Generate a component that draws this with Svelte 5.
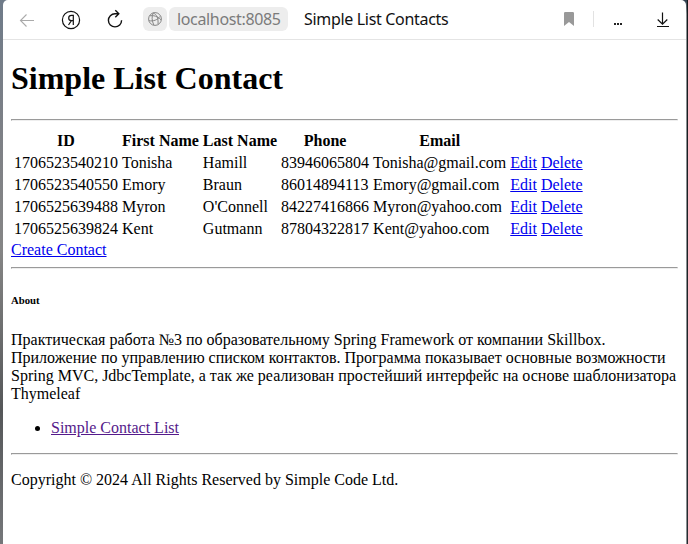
<script>
  const contacts = [
    ['1706523540210', 'Tonisha', 'Hamill', '83946065804', 'Tonisha@gmail.com'],
    ['1706523540550', 'Emory', 'Braun', '86014894113', 'Emory@gmail.com'],
    ['1706525639488', 'Myron', "O'Connell", '84227416866', 'Myron@yahoo.com'],
    ['1706525639824', 'Kent', 'Gutmann', '87804322817', 'Kent@yahoo.com']
  ];
  const headings = ['ID', 'First Name', 'Last Name', 'Phone', 'Email'];
</script>

<div class="desktop">
  <div class="window">
    <header class="toolbar">
      <svg class="back" width="16" height="16" viewBox="0 0 16 16" fill="none" stroke="#aaa" stroke-width="1.1"><path d="M15 8.5H1.5M7.5 2.5l-6 6 6 6" /></svg>
      <svg class="ya" width="20" height="20" viewBox="0 0 20 20" fill="none" stroke="#111" stroke-width="1.2"><circle cx="10" cy="10" r="8.6" /><path d="M12.3 15V5.4H10.6C8.7 5.4 7.7 6.5 7.7 8c0 1.7 1 2.6 2.7 2.6h1.9M10.4 10.7L7.5 15" /></svg>
      <svg class="reload" width="18" height="20" viewBox="0 0 18 20" fill="none" stroke="#111" stroke-width="1.4"><path d="M12.4 4.7H9a6.6 6.6 0 1 0 6.6 6.6M9.3 1.2l3.5 3.5-3.5 3.5" /></svg>
      <span class="globe">
        <svg width="14" height="14" viewBox="0 0 14 14" fill="none" stroke="#858585" stroke-width="1"><circle cx="7" cy="7" r="6.4" /><path d="M5.2.9C3.6 4.5 3.7 8.6 5.8 13M5.3 1c3.4 1.6 5.2 4.7 4.7 11.4M.9 8.7c4.4.9 8.9-.9 11.2-4.4M1.8 3.9c3.2-.9 8 .3 11.2 4" /></svg>
      </span>
      <span class="address">localhost:8085</span>
      <span class="title">Simple List Contacts</span>
      <svg class="bookmark" width="10" height="14" viewBox="0 0 10 14"><path d="M0 1.2Q0 0 1.2 0h7.6Q10 0 10 1.2V14L5 10 0 14z" fill="#999" /></svg>
      <span class="divider"></span>
      <svg class="more" width="8" height="2" viewBox="0 0 8 2" fill="#222"><path d="M0 0h2v2H0zM3 0h2v2H3zM6 0h2v2H6z" /></svg>
      <svg class="download" width="12" height="16" viewBox="0 0 12 16" fill="none" stroke="#111" stroke-width="1.2"><path d="M5.5 .5v11.7M.7 7.5l4.8 4.7 4.8-4.7M0 14.5h12" /></svg>
    </header>
    <main>
      <h1>Simple List Contact</h1>
      <hr />
      <table>
        <thead>
          <tr>{#each headings as heading}<th>{heading}</th>{/each}</tr>
        </thead>
        <tbody>
          {#each contacts as contact}
            <tr>
              {#each contact as value}<td>{value}</td>{/each}
              <td><a href="#edit">Edit</a></td>
              <td><a href="#delete">Delete</a></td>
            </tr>
          {/each}
        </tbody>
      </table>
      <a href="#create">Create Contact</a>
      <hr />
      <h6>About</h6>
      <p>Практическая работа №3 по образовательному Spring Framework от компании Skillbox. Приложение по управлению списком контактов. Программа показывает основные возможности Spring MVC, JdbcTemplate, а так же реализован простейший интерфейс на основе шаблонизатора Thymeleaf</p>
      <ul><li><a class="visited" href="#list">Simple Contact List</a></li></ul>
      <hr />
      <p>Copyright © 2024 All Rights Reserved by Simple Code Ltd.</p>
    </main>
  </div>
</div>

<style>
  .desktop {
    height: 544px;
    box-sizing: border-box;
    padding: 0 2px 0 3px;
    overflow: hidden;
    background:
      linear-gradient(#15191c, #262c30) right / 1px 100% no-repeat,
      linear-gradient(#2c3c4c, #8a8f92 14px, #8a8f92) right / 8px 100% no-repeat,
      linear-gradient(#6f7b89, #7d8086 130px, #858585 250px, #555759 410px, #75777a);
  }
  .window {
    height: 100%;
    background: #fff;
    border-radius: 5px 5px 0 0;
    display: flow-root;
  }
  .toolbar {
    height: 39px;
    border-bottom: 1px solid #e4e4e4;
    display: flex;
    align-items: center;
    font: 16px 'Noto Sans', sans-serif;
    white-space: nowrap;
  }
  .toolbar > * { flex: none; }
  .back { margin-left: 16px; }
  .ya { margin-left: 26px; }
  .reload { margin-left: 25px; margin-top: -2px; }
  .globe {
    width: 24px;
    height: 24px;
    margin-left: 19px;
    margin-top: -1px;
    border-radius: 6px;
    background: #ededed;
    display: flex;
    align-items: center;
    justify-content: center;
  }
  .address {
    width: 119px;
    height: 24px;
    line-height: 24px;
    box-sizing: border-box;
    padding-left: 8px;
    margin: -1px 0 0 2px;
    border-radius: 6px;
    background: #ededed;
    color: #7b7b7b;
    letter-spacing: -0.35px;
  }
  .title {
    margin-left: 16px;
    margin-top: -1px;
    color: #111;
    letter-spacing: -0.32px;
  }
  .bookmark { margin-left: auto; margin-top: -1px; }
  .divider { width: 1px; height: 16px; background: #e2e2e2; margin-left: 19px; margin-top: -1px; }
  .more { margin: 9px 0 0 20px; }
  .download { margin: 1px 17px 0 35px; }
  main {
    padding: 0 8px;
    margin-top: -1px;
    display: flow-root;
    font: 16px 'Liberation Serif', serif;
    color: #000;
  }
  h1 { font-size: 32px; margin: 21.44px 0; }
  h6 { font-size: 10.72px; margin: 24.98px 0; }
  a { color: #0000ee; }
  a.visited { color: #551a8b; }
</style>
